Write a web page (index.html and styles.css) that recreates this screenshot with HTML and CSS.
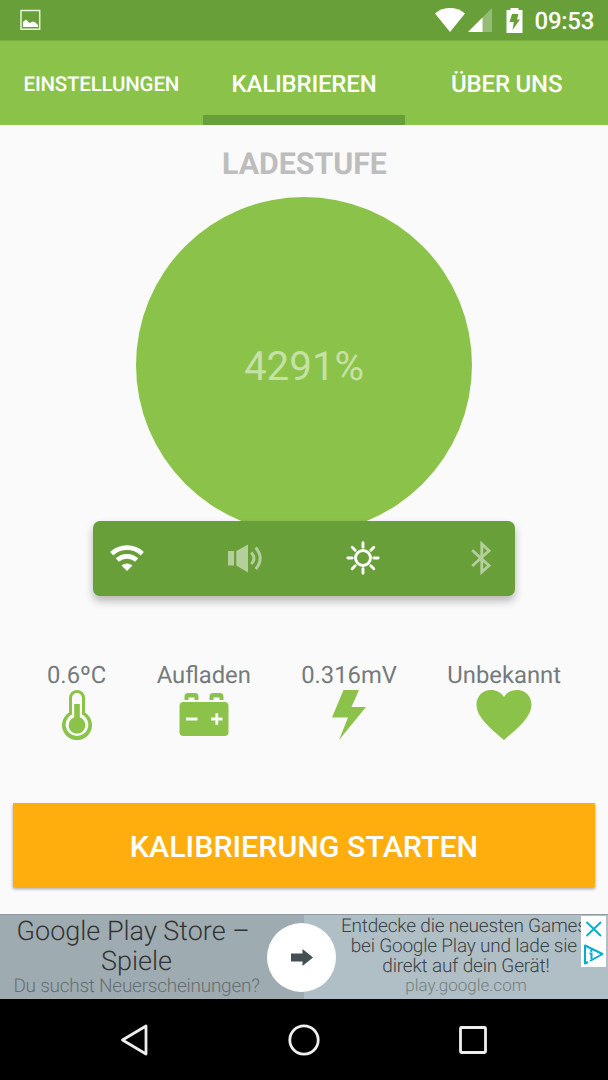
FILE: index.html
```html
<!DOCTYPE html>
<html lang="de">
<head>
  <meta charset="UTF-8" />
  <meta name="viewport" content="width=device-width, initial-scale=1.0" />
  <title>Kalibrieren</title>
  <link rel="stylesheet" href="styles.css">
</head>
<body>
  <div class="status-bar">
    <svg width="22" height="22" viewBox="0 0 22 22">
      <rect x="1" y="1.500" width="18.700" height="18.700" fill="none" stroke="#e9f2e1" stroke-width="1.500" />
      <path d="M3 18v-5l3-2.500 3.500 3.500 3.500-1.500 2.500 1 2.500 2.500v2z" fill="#fff" />
    </svg>
    <div class="status-icons">
      <svg width="30" height="24" viewBox="0 0 30 24"><path d="M0 5.500C8.500-1.700 21.500-1.700 30 5.500L15 24z" fill="#fff" /></svg>
      <svg class="signal" width="24" height="24" viewBox="0 0 24 24">
        <path d="M0 24 24 0v24z" fill="#fff" opacity=".3" />
        <path d="M0 24 14.500 9.500V24z" fill="#fff" />
      </svg>
      <svg class="charging" width="17" height="25" viewBox="0 0 17 25">
        <path d="M4.500 0h8v2h4v23H.5V2h4z" fill="#fff" />
        <path d="M6 6h6.500l-1.500 5.500h3L6.500 22l1.300-8H3.500z" fill="#689f38" />
      </svg>
      <span class="clock">09:53</span>
    </div>
  </div>

  <div class="tabs">
    <div class="tab small">EINSTELLUNGEN</div>
    <div class="tab active">KALIBRIEREN</div>
    <div class="tab">ÜBER UNS</div>
  </div>

  <div class="content">
    <h1>LADESTUFE</h1>
    <div class="level">4291%</div>

    <div class="toggles">
      <svg width="34" height="34" viewBox="0 0 34 34">
        <g fill="none" stroke="#fff" stroke-width="4.700">
          <path d="M1.700 12.700a22.500 22.500 0 0 1 30.600 0" />
          <path d="M7.300 19a14.500 14.500 0 0 1 19.400 0" />
        </g>
        <path d="M11.500 24.500a8.500 8.500 0 0 1 11 0L17 30z" fill="#fff" />
      </svg>
      <svg class="off" width="34" height="34" viewBox="0 0 34 34">
        <path d="M0 10h6v14.500H0zM8.300 10 20 3.500v28L8.300 24.500z" fill="#fff" />
        <path d="M23.200 11.500q5.500 6 0 11.500M27.700 6.500q9 11 0 21.500" fill="none" stroke="#fff" stroke-width="3" />
      </svg>
      <svg width="34" height="34" viewBox="0 0 34 34">
        <g fill="none" stroke="#fff" stroke-width="2.900" stroke-linecap="round">
          <circle cx="17" cy="17" r="7.500" />
          <path d="M17 1.800v4.400M17 27.800v4.400M1.800 17h4.400M27.800 17h4.400M6.200 6.200l3 3M24.800 24.800l3 3M27.800 6.200l-3 3M9.200 24.800l-3 3" />
        </g>
      </svg>
      <svg class="off" width="34" height="34" viewBox="0 0 34 34">
        <path d="M8.200 9.200 25 24.500 17.800 31V3L25 9.800 8.200 25" fill="none" stroke="#fff" stroke-width="2.900" />
      </svg>
    </div>

    <div class="stats">
      <div class="stat">
        <span>0.6ºC</span>
        <svg width="30" height="50" viewBox="0 0 30 50">
          <path d="M7 8a8 8 0 0 1 16 0v14.500a15 15 0 1 1-16 0z" fill="#8bc34a" />
          <path d="M10 8a5 5 0 0 1 10 0v16.500a11.300 11.300 0 1 1-10 0z" fill="#fafafa" />
          <path d="M12.200 14h5.600v13.500a8.300 8.300 0 1 1-5.600 0z" fill="#8bc34a" />
        </svg>
      </div>
      <div class="stat">
        <span>Aufladen</span>
        <svg width="50" height="50" viewBox="0 0 50 50">
          <path d="M5.500 10V6.500q0-3.500 3.500-3.500h7q3.500 0 3.500 3.500V10h-4V7.500H9.500V10zM30.500 10V6.500q0-3.500 3.500-3.500h7q3.500 0 3.500 3.500V10h-4V7.500h-6V10z" fill="#8bc34a" />
          <rect x=".5" y="12" width="49" height="34" rx="4" fill="#8bc34a" />
          <path d="M7 29h11.500M32 29h11.500M37.800 23.200v11.600" stroke="#fafafa" stroke-width="2.800" />
        </svg>
      </div>
      <div class="stat">
        <span>0.316mV</span>
        <svg width="34" height="50" viewBox="0 0 34 50"><path d="M11.500 0H27l-7.500 17H34L7 50l9-22.500H0z" fill="#8bc34a" /></svg>
      </div>
      <div class="stat">
        <span>Unbekannt</span>
        <svg width="56" height="50" viewBox="0 0 56 50"><path d="M28 50C14 38 .5 27 .5 14.500.5 6 7 0 15 0c5.500 0 10.300 2.700 13 7 2.700-4.300 7.500-7 13-7 8 0 14.500 6 14.500 14.500C55.500 27 42 38 28 50z" fill="#8bc34a" /></svg>
      </div>
    </div>

    <button class="start">KALIBRIERUNG STARTEN</button>
  </div>

  <div class="ad">
    <div class="ad-left">
      <p class="ad-title">Google Play Store –&nbsp;<br>Spiele</p>
      <p class="ad-sub">Du suchst Neuerscheinungen?</p>
    </div>
    <div class="ad-right">
      <p class="ad-text">Entdecke die neuesten Games&nbsp;<br>bei Google Play und lade sie&nbsp;<br>direkt auf dein Gerät!</p>
      <p class="ad-url">play.google.com</p>
    </div>
    <div class="ad-arrow">
      <svg width="24" height="20" viewBox="0 0 24 20"><path d="M1 5.500h11.500V1L23 9.500 12.500 18v-4.500H1z" fill="#455054" /></svg>
    </div>
    <div class="ad-choices">
      <svg width="25" height="51" viewBox="0 0 25 51">
        <g fill="none" stroke="#00aecd" stroke-width="1.800">
          <path d="M5.500 6l14.500 14M20 6l-14.500 14" />
          <path d="M9 45 21.500 38 4 29.500v18l3-1.500" stroke-width="2" stroke-linejoin="round" />
          <path d="M8.500 37.500h2v5.500" stroke-width="2" />
        </g>
        <circle cx="10.300" cy="34.800" r="1.200" fill="#00aecd" />
      </svg>
    </div>
  </div>

  <div class="nav-bar">
    <svg width="34" height="34" viewBox="0 0 34 34"><path d="M28 3v28L4.500 17z" /></svg>
    <svg width="34" height="34" viewBox="0 0 34 34"><circle cx="17" cy="17" r="14.200" /></svg>
    <svg width="34" height="34" viewBox="0 0 34 34"><rect x="4.500" y="4.500" width="25" height="25" rx="1" /></svg>
  </div>
</body>
</html>
```

FILE: styles.css
```css
* { box-sizing: border-box; }
body { margin: 0; width: 608px; height: 1080px; display: flex; flex-direction: column; overflow: hidden; background: #fafafa; font-family: Roboto, sans-serif; text-rendering: geometricPrecision; }
svg { display: block; flex: none; }
p { margin: 0; }

.status-bar { height: 41px; flex: none; display: flex; justify-content: space-between; align-items: center; padding: 0 14px 0 20px; background: #689f38; border-bottom: 1px solid #7baf41; color: #fff; }
.status-icons { display: flex; align-items: center; }
.signal { margin-left: 3px; }
.charging { margin-left: 14px; }
.clock { margin-left: 12px; padding-top: 2px; font-size: 24px; font-weight: 500; line-height: 38px; letter-spacing: -0.3px; }

.tabs { height: 84px; flex: none; display: grid; grid-template-columns: repeat(3, 1fr); background: #8bc34a; }
.tab { display: flex; align-items: center; justify-content: center; padding-top: 1px; color: #fff; font-size: 24px; font-weight: 500; letter-spacing: -0.2px; border-top: 10px solid transparent; border-bottom: 10px solid transparent; }
.tab.small { padding-top: 3px; font-size: 20.5px; }
.tab.active { border-bottom-color: #689f38; }

.content { height: 789px; flex: none; display: flex; flex-direction: column; align-items: center; }
h1 { margin: 21px 0 0; padding-left: 1px; font-size: 30.3px; line-height: 38px; color: #bdbdbd; }
.level { width: 336px; height: 336px; margin-top: 13px; padding-top: 2px; flex: none; display: flex; align-items: center; justify-content: center; border-radius: 50%; background: #8bc34a; color: rgba(255, 255, 255, 0.5); font-size: 40.3px; }
.toggles { position: relative; width: 422px; height: 75px; margin-top: -12px; flex: none; display: flex; justify-content: space-between; align-items: center; padding: 0 17px 1px; border-radius: 7px; background: #689f38; box-shadow: 0 5px 9px rgba(0, 0, 0, 0.27); }
.off { opacity: 0.5; }

.stats { width: 100%; margin-top: 65px; padding: 0 47px; display: flex; justify-content: space-between; }
.stat { display: flex; flex-direction: column; align-items: center; color: #757a7c; font-size: 23.8px; line-height: 29px; }
.start { width: 582px; height: 84px; margin-top: 63px; padding: 2px 0 0; flex: none; border: none; background: #ffae0d; color: #fff; font-family: inherit; font-size: 30.4px; font-weight: 500; box-shadow: 0 2px 3px rgba(0, 0, 0, 0.35); }

.ad { position: relative; height: 85px; flex: none; display: grid; grid-template-columns: 1fr 1fr; background: #b0bec5; border-top: 1px solid #8f9da3; text-align: center; font-weight: 300; white-space: nowrap; overflow: hidden; }
.ad-left { background: #9eabb1; padding: 1px 31px 0 0; color: #333; }
.ad-title { font-size: 27px; line-height: 30px; }
.ad-sub { font-size: 19px; line-height: 20px; letter-spacing: -0.25px; color: #666e71; }
.ad-right { padding: 1px 0 0 20px; color: #3c4245; }
.ad-text { font-size: 19px; line-height: 20px; letter-spacing: -0.2px; }
.ad-url { font-size: 17px; line-height: 20px; color: #777f82; }
.ad-arrow { position: absolute; left: 267px; top: 8px; width: 69px; height: 69px; display: flex; align-items: center; justify-content: center; border-radius: 50%; background: #fff; }
.ad-choices { position: absolute; right: 2px; top: 1px; background: #fff; }

.nav-bar { height: 81px; flex: none; display: flex; justify-content: center; align-items: center; gap: 135px; background: #000; }
.nav-bar svg { fill: none; stroke: #eee; stroke-width: 2.8; stroke-linejoin: round; }
```
